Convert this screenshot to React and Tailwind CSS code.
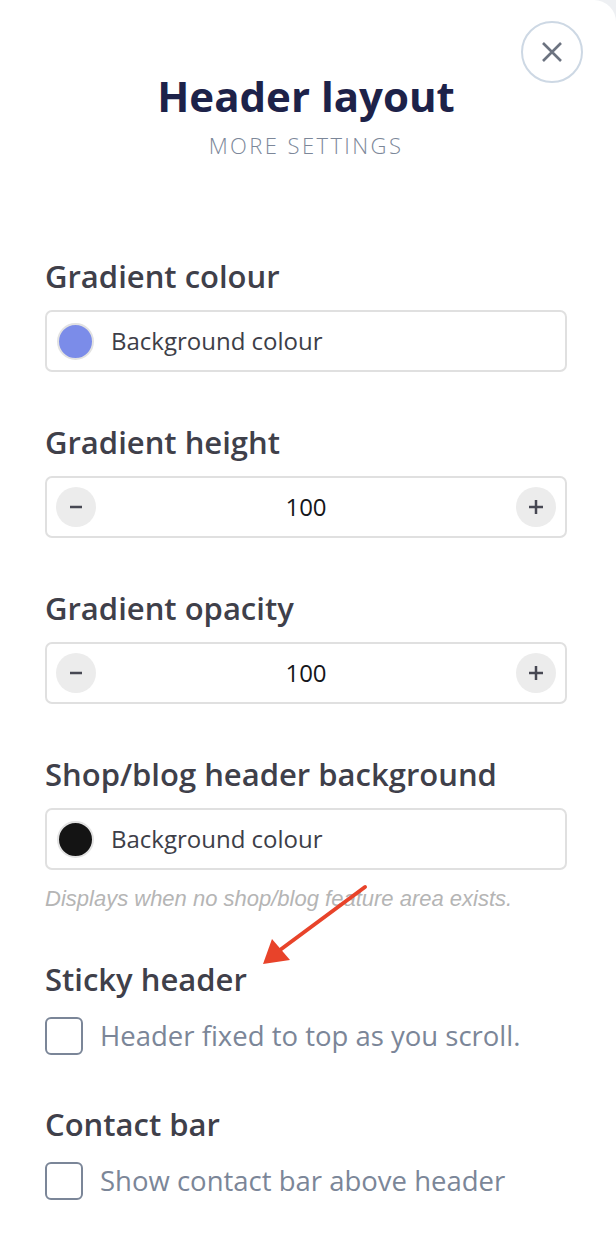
import { useState } from "react";

const font = { fontFamily: "'Open Sans', 'Noto Sans', sans-serif" };

function Swatch({ color }) {
  return (
    <span
      className="block h-[37px] w-[37px] shrink-0 rounded-full border-2 border-[#e2e2e2]"
      style={{ backgroundColor: color }}
    />
  );
}

function ColourField({ color }) {
  return (
    <div className="flex h-[62px] items-center gap-[17px] rounded-[7px] border-2 border-[#e0e0e0] bg-white pl-[10px]">
      <Swatch color={color} />
      <span className="text-[24px] text-[#3d3e48]">Background colour</span>
    </div>
  );
}

function Stepper({ value }) {
  return (
    <div className="flex h-[62px] items-center justify-between rounded-[7px] border-2 border-[#e0e0e0] bg-white px-[9px]">
      <button className="flex h-[40px] w-[40px] items-center justify-center rounded-full bg-[#ececec]">
        <svg width="16" height="16" viewBox="0 0 16 16">
          <path d="M2 8h12" stroke="#474853" strokeWidth="2.5" />
        </svg>
      </button>
      <span className="text-[24px] text-[#15161a]">{value}</span>
      <button className="flex h-[40px] w-[40px] items-center justify-center rounded-full bg-[#ececec]">
        <svg width="18" height="18" viewBox="0 0 18 18">
          <path d="M2 9h14M9 2v14" stroke="#474853" strokeWidth="2.5" />
        </svg>
      </button>
    </div>
  );
}

function Label({ children }) {
  return (
    <h3 className="h-[40px] text-[31px] font-semibold leading-[40px] text-[#3f404a]">
      {children}
    </h3>
  );
}

function Check({ label }) {
  const [on, setOn] = useState(false);
  return (
    <label className="flex cursor-pointer items-center gap-[17px]">
      <button
        onClick={() => setOn(!on)}
        className="h-[38px] w-[38px] shrink-0 rounded-[6px] border-2 border-[#7b8698] bg-white"
      />
      <span className="text-[27.5px] leading-[38px] text-[#7b8698]">{label}</span>
    </label>
  );
}

export default function App() {
  return (
    <div className="min-h-screen bg-[#eef0f3]" style={font}>
      <div className="relative min-h-[1250px] rounded-tr-[22px] bg-white pb-10 pl-[45px] pr-[49px]">
        <button className="absolute left-[521px] top-[21px] flex h-[62px] w-[62px] items-center justify-center rounded-full border-2 border-[#cdd8e4] bg-white">
          <svg width="22" height="22" viewBox="0 0 22 22">
            <path d="M2 2l18 18M20 2L2 20" stroke="#6c7380" strokeWidth="2.6" />
          </svg>
        </button>

        {/* annotation arrow */}
        <svg
          className="absolute left-[250px] top-[875px]"
          width="130"
          height="100"
          viewBox="250 875 130 100"
        >
          <path d="M365 887L280 950" stroke="#e8432a" strokeWidth="4" strokeLinecap="round" />
          <path d="M263 964L272 939L290 960Z" fill="#e8432a" />
        </svg>

        <header className="pt-[71px] text-center">
          <h1 className="text-[42px] font-bold leading-[50px] text-[#1d2249]">
            Header layout
          </h1>
          <p className="mt-[9px] text-[22px] font-light uppercase leading-[30px] tracking-[0.11em] text-[#7c8799]">
            More settings
          </p>
        </header>

        <section className="mt-[96px]">
          <Label>Gradient colour</Label>
          <div className="mt-[14px]">
            <ColourField color="#7b8ce9" />
          </div>
        </section>

        <section className="mt-[50px]">
          <Label>Gradient height</Label>
          <div className="mt-[14px]">
            <Stepper value={100} />
          </div>
        </section>

        <section className="mt-[50px]">
          <Label>Gradient opacity</Label>
          <div className="mt-[14px]">
            <Stepper value={100} />
          </div>
        </section>

        <section className="mt-[50px]">
          <Label>Shop/blog header background</Label>
          <div className="mt-[14px]">
            <ColourField color="#141414" />
          </div>
          <p
            className="mt-[16px] text-[22px] italic leading-[26px] text-[#b5b5b5]"
            style={{ fontFamily: "'Liberation Sans', Arial, sans-serif" }}
          >
            Displays when no shop/blog feature area exists.
          </p>
        </section>

        <section className="mt-[47px]">
          <Label>Sticky header</Label>
          <div className="mt-[18px]">
            <Check label="Header fixed to top as you scroll." />
          </div>
        </section>

        <section className="mt-[49px]">
          <Label>Contact bar</Label>
          <div className="mt-[18px]">
            <Check label="Show contact bar above header" />
          </div>
        </section>
      </div>
    </div>
  );
}
